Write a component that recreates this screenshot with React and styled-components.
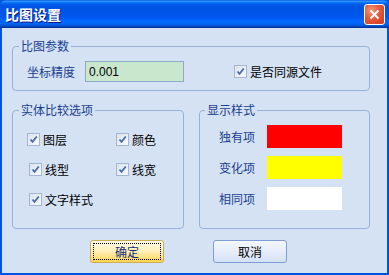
import styled, {createGlobalStyle} from "styled-components";

const GlobalStyle = createGlobalStyle`
  body {
    margin: 0;
    font-family: "Noto Sans CJK SC", "Liberation Sans", sans-serif;
    font-size: 12px;
  }
`

const Window = styled.div`
  width: 389px;
  height: 275px;
  box-sizing: border-box;
  display: flex;
  flex-direction: column;
  background: #0053e1;
`

const TitleBar = styled.div`
  height: 28px;
  flex: none;
  display: flex;
  align-items: center;
  justify-content: space-between;
  padding: 0 4px 0 5px;
  border-radius: 6px 6px 0 0;
  background: linear-gradient(to bottom, #0058ee 0%, #3a93ff 4%, #288eff 6%, #127dff 8%, #036ffc 10%, #0262ee 14%, #0057e5 20%, #0054e3 24%, #0055eb 56%, #005bf5 66%, #026afe 76%, #0062ef 86%, #0052d6 92%, #0040ab 96%, #003092 100%);
`

const Title = styled.span`
  color: #fff;
  font-size: 14px;
  font-weight: bold;
  text-shadow: 1px 1px #0a1883;
`

const CloseButton = styled.div`
  width: 21px;
  height: 21px;
  box-sizing: border-box;
  border: 1px solid #fff;
  border-radius: 3px;
  background: radial-gradient(circle at 35% 30%, #f29a7c 0%, #e35a3c 45%, #c83a1e 100%);
  display: flex;
  align-items: center;
  justify-content: center;
`

const Body = styled.div`
  flex: 1;
  margin: 0 2px 2px;
  background: #d4e2f3;
  padding: 11px 17px 0 10px;
  display: flex;
  flex-direction: column;
`

const Group = styled.fieldset`
  margin: 0;
  padding: 0;
  border: 1px solid #98b1d8;
  border-radius: 4px;
  box-sizing: border-box;
  width: ${(p) => p.$width}px;
  height: ${(p) => p.$height}px;
  min-width: 0;
`

const Legend = styled.legend`
  margin-left: ${(p) => p.$offset}px;
  padding: 0 2px;
  line-height: 14px;
  font-size: 12px;
  color: #1b3f8f;
`

const ParamRow = styled.div`
  height: 37px;
  display: flex;
  align-items: center;
  padding-left: 14px;
`

const FieldLabel = styled.span`
  color: #1b3f8f;
  width: ${(p) => p.$width}px;
  flex: none;
`

const TextInput = styled.input`
  width: 99px;
  height: 21px;
  box-sizing: border-box;
  border: 1px solid #8eacc8;
  background: #c9e7cc;
  padding: 0 3px;
  margin-left: 10px;
  font-family: "Liberation Sans", sans-serif;
  font-size: 12px;
  color: #000;
  outline: none;
`

const Check = styled.label`
  display: flex;
  align-items: center;
  gap: 3px;
  color: #000;
  margin-left: ${(p) => p.$indent || 0}px;
  white-space: nowrap;
`

const Box = styled.span`
  width: 13px;
  height: 13px;
  box-sizing: border-box;
  border: 1px solid #a5b6d2;
  background: linear-gradient(135deg, #dce3ee, #f7f9fc);
  display: flex;
  align-items: center;
  justify-content: center;
`

const Columns = styled.div`
  display: flex;
  gap: 15px;
  margin-top: 12px;
`

const CheckGrid = styled.div`
  display: grid;
  grid-template-columns: 89px auto;
  grid-auto-rows: 30px;
  align-items: center;
  padding: 7px 0 0 14px;
`

const StyleList = styled.div`
  display: flex;
  flex-direction: column;
  gap: 8px;
  padding: 8px 0 0 19px;
`

const StyleRow = styled.div`
  display: flex;
  align-items: center;
  gap: 12px;
`

const Swatch = styled.div`
  width: 75px;
  height: 23px;
  background: ${(p) => p.$color};
`

const Buttons = styled.div`
  display: flex;
  gap: 49px;
  padding-left: 78px;
  margin-top: 11px;
`

const Button = styled.button`
  width: 74px;
  height: 23px;
  box-sizing: border-box;
  border-radius: 3px;
  font-family: inherit;
  font-size: 12px;
  padding: 0;
  display: flex;
  align-items: center;
  justify-content: center;
  border: 1px solid ${(p) => (p.$primary ? "#cdae55" : "#7f9dd3")};
  background: ${(p) =>
    p.$primary
      ? "linear-gradient(to bottom, #fffbe6 0%, #fff1bd 45%, #ffe287 75%, #ffd24a 100%)"
      : "linear-gradient(to bottom, #f3f7fe 0%, #e6eefb 50%, #d4e1f5 100%)"};
  color: ${(p) => (p.$primary ? "#14307a" : "#000")};
`

const FocusRect = styled.span`
  flex: 1;
  align-self: stretch;
  margin: 2px;
  border: 1px dotted #000;
  display: flex;
  align-items: center;
  justify-content: center;
`

function CheckMark() {
  return (
    <Box>
      <svg width="9" height="9" viewBox="0 0 9 9">
        <path d="M1.5 4.5 L3.5 6.8 L7.8 1.5" fill="none" stroke="#4a6aa8" strokeWidth="1.8" />
      </svg>
    </Box>
  );
}

function CheckBox({label, indent}) {
  return (
    <Check $indent={indent}>
      <CheckMark />
      {label}
    </Check>
  );
}

export default function App() {
  return (
    <>
      <GlobalStyle />
      <Window>
        <TitleBar>
          <Title>比图设置</Title>
          <CloseButton>
            <svg width="11" height="11" viewBox="0 0 11 11">
              <path d="M1.5 1.5 L9.5 9.5 M9.5 1.5 L1.5 9.5" stroke="#fff" strokeWidth="2" />
            </svg>
          </CloseButton>
        </TitleBar>
        <Body>
          <Group $width={358} $height={52}>
            <Legend $offset={6}>比图参数</Legend>
            <ParamRow>
              <FieldLabel $width={48}>坐标精度</FieldLabel>
              <TextInput defaultValue="0.001" />
              <CheckBox label="是否同源文件" indent={50} />
            </ParamRow>
          </Group>
          <Columns>
            <Group $width={172} $height={126}>
              <Legend $offset={6}>实体比较选项</Legend>
              <CheckGrid>
                <CheckBox label="图层" />
                <CheckBox label="颜色" />
                <CheckBox label="线型" indent={2} />
                <CheckBox label="线宽" />
                <CheckBox label="文字样式" indent={2} />
              </CheckGrid>
            </Group>
            <Group $width={171} $height={126}>
              <Legend $offset={5}>显示样式</Legend>
              <StyleList>
                <StyleRow>
                  <FieldLabel $width={36}>独有项</FieldLabel>
                  <Swatch $color="#ff0000" />
                </StyleRow>
                <StyleRow>
                  <FieldLabel $width={36}>变化项</FieldLabel>
                  <Swatch $color="#ffff00" />
                </StyleRow>
                <StyleRow>
                  <FieldLabel $width={36}>相同项</FieldLabel>
                  <Swatch $color="#ffffff" />
                </StyleRow>
              </StyleList>
            </Group>
          </Columns>
          <Buttons>
            <Button $primary>
              <FocusRect>确定</FocusRect>
            </Button>
            <Button>取消</Button>
          </Buttons>
        </Body>
      </Window>
    </>
  );
}
